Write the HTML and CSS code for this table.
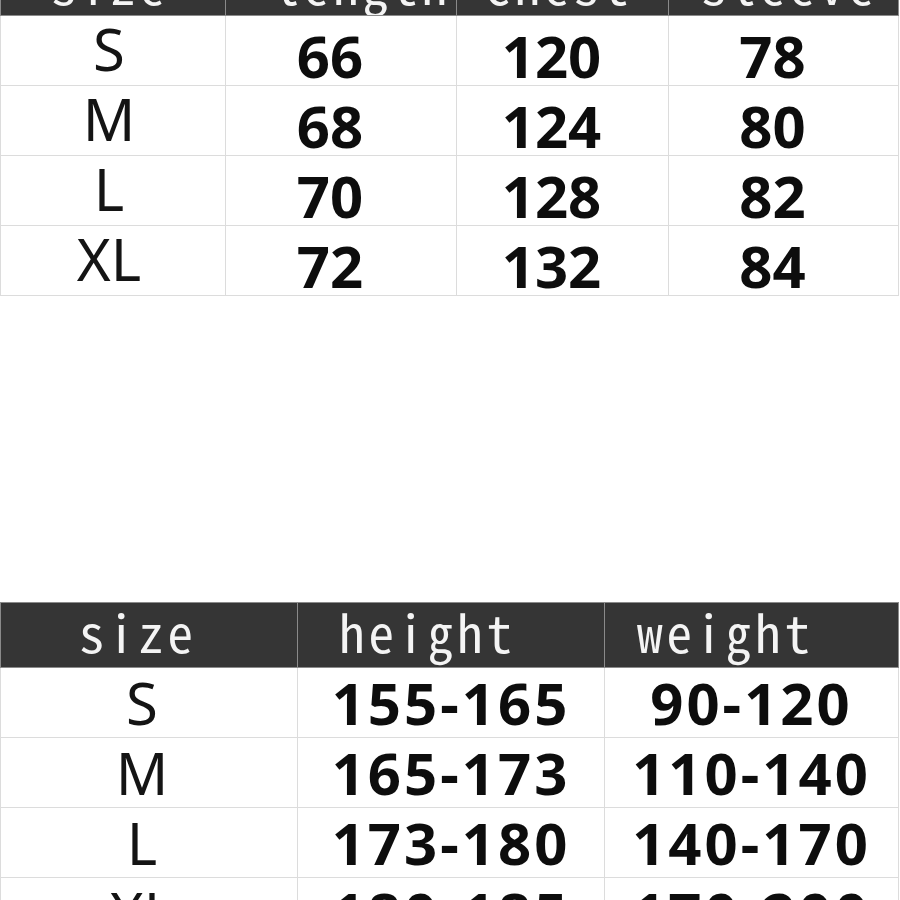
FILE: index.html
```html
<!DOCTYPE html>
<html>
<head>
<meta charset="utf-8">
<link rel="stylesheet" href="styles.css">
</head>
<body>
<div class="page">
  <table class="chart chart-top">
    <colgroup>
      <col class="c-a"><col class="c-b"><col class="c-c"><col class="c-d">
    </colgroup>
    <thead>
      <tr>
        <th class="h-size">size</th>
        <th class="h-len">length</th>
        <th class="h-chest">chest</th>
        <th class="h-sleeve">sleeve</th>
      </tr>
    </thead>
    <tbody>
      <tr><td class="sz">S</td><td class="num">66</td><td class="num">120</td><td class="num">78</td></tr>
      <tr><td class="sz">M</td><td class="num">68</td><td class="num">124</td><td class="num">80</td></tr>
      <tr><td class="sz">L</td><td class="num">70</td><td class="num">128</td><td class="num">82</td></tr>
      <tr><td class="sz">XL</td><td class="num">72</td><td class="num">132</td><td class="num">84</td></tr>
    </tbody>
  </table>

  <table class="chart chart-bottom">
    <colgroup>
      <col class="b-a"><col class="b-b"><col class="b-c">
    </colgroup>
    <thead>
      <tr>
        <th class="h2-size">size</th>
        <th class="h2-height">height</th>
        <th class="h2-weight">weight</th>
      </tr>
    </thead>
    <tbody>
      <tr><td class="sz">S</td><td class="num">155-165</td><td class="num">90-120</td></tr>
      <tr><td class="sz">M</td><td class="num">165-173</td><td class="num">110-140</td></tr>
      <tr><td class="sz">L</td><td class="num">173-180</td><td class="num">140-170</td></tr>
      <tr><td class="sz">XL</td><td class="num">180-185</td><td class="num">170-200</td></tr>
    </tbody>
  </table>
</div>
</body>
</html>
```

FILE: styles.css
```css
html, body {
  margin: 0;
  padding: 0;
  background: #ffffff;
  overflow: hidden;
}

.page {
  width: 900px;
  height: 900px;
  overflow: hidden;
  background: #ffffff;
}

.chart {
  width: 898px;
  border-collapse: collapse;
  table-layout: fixed;
  color: #111111;
}

.chart-top {
  margin-top: -40px;
}

.chart-bottom {
  margin-top: 306px;
}

.c-a { width: 225px; }
.c-b { width: 231px; }
.c-c { width: 212px; }
.c-d { width: 230px; }

.b-a { width: 297px; }
.b-b { width: 307px; }
.b-c { width: 294px; }

.chart th {
  background: #353535;
  color: #f4f4f4;
  font-family: "Noto Sans CJK JP", "DejaVu Sans Mono", monospace;
  font-feature-settings: "hwid";
  font-weight: 400;
  font-size: 51px;
  letter-spacing: 4px;
  line-height: 44px;
  height: 44px;
  text-align: left;
  vertical-align: top;
  padding: 0;
  border: 1px solid #8a8a8a;
  white-space: nowrap;
  overflow: hidden;
}

.chart-top th {
  padding-bottom: 10px;
}

.chart-bottom th {
  padding-top: 6px;
  padding-bottom: 14px;
}

.h-size { padding-left: 50px !important; }
.h-len { padding-left: 48px !important; }
.h-chest { padding-left: 28px !important; }
.h-sleeve { padding-left: 32px !important; }

.h2-size { padding-left: 78px !important; }
.h2-height { padding-left: 41px !important; }
.h2-weight { padding-left: 32px !important; }

.chart td {
  border: 1px solid #dcdcdc;
  text-align: center;
  vertical-align: middle;
  padding: 0;
  height: 69px;
  line-height: 1;
  white-space: nowrap;
}

.chart .sz {
  font-family: "Noto Sans", sans-serif;
  font-weight: 400;
  font-size: 58px;
  color: #141414;
}

.chart .num {
  font-family: "Noto Sans", sans-serif;
  font-weight: 700;
  font-size: 58px;
  color: #0d0d0d;
}

.chart-top .sz { padding-right: 8px; padding-bottom: 4px; height: 65px; }
.chart-top .num { padding-right: 22px; padding-top: 10px; height: 59px; }

.chart-bottom .sz { padding-right: 14px; }
.chart-bottom .num { letter-spacing: 3px; }
```
